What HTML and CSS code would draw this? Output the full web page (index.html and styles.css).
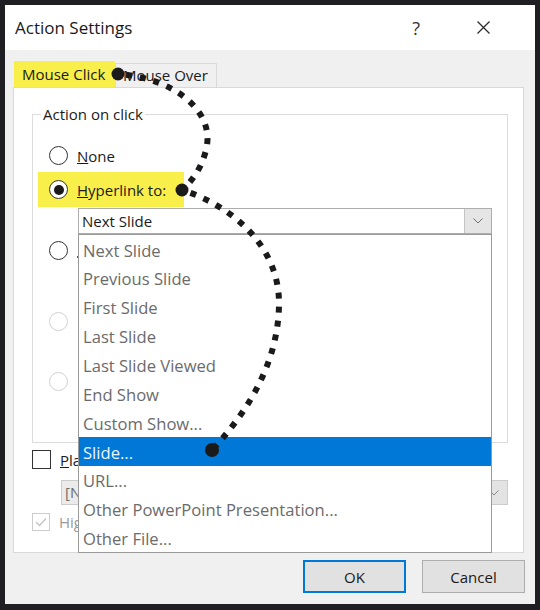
FILE: index.html
```html
<!DOCTYPE html>
<html lang="en">
<head>
<meta charset="utf-8">
<title>Action Settings</title>
<link rel="stylesheet" href="styles.css">
</head>
<body>
<div class="dialog">
  <div class="titlebar">
    <span class="title">Action Settings</span>
    <span class="help">?</span>
    <svg class="close" width="13" height="13" viewBox="0 0 13 13"><path d="M0.5 0.5 L12.5 12.5 M12.5 0.5 L0.5 12.5" stroke="#2b2b2b" stroke-width="1.3" fill="none"/></svg>
  </div>
  <div class="content">
    <div class="tabs">
      <div class="tab active">Mouse Click</div>
      <div class="tab">Mouse Over</div>
    </div>
    <div class="panel">
      <fieldset class="group">
        <legend>Action on click</legend>
        <div class="opt o1"><span class="radio"></span><span><u>N</u>one</span></div>
        <div class="opt o2"><span class="hl"><span class="radio on"></span><span><u>H</u>yperlink to:</span></span></div>
        <div class="combo"><span class="val">Next Slide</span><span class="cbtn"><svg width="10" height="6" viewBox="0 0 10 6"><path d="M0.5 0.5 L5 5 L9.5 0.5" stroke="#707070" stroke-width="1" fill="none"/></svg></span></div>
        <div class="opt o3"><span class="radio"></span><span class="mark"></span></div>
        <div class="opt o4 dis"><span class="radio"></span></div>
        <div class="opt o5 dis"><span class="radio"></span></div>
      </fieldset>
      <div class="chk-row"><span class="check"></span><span><u>P</u>lay sound:</span></div>
      <div class="combo sound"><span class="val">[No Sound]</span><span class="cbtn"><svg width="10" height="6" viewBox="0 0 10 6"><path d="M0.5 0.5 L5 5 L9.5 0.5" stroke="#8a8a8a" stroke-width="1" fill="none"/></svg></span></div>
      <div class="chk-row hi"><span class="check on"><svg width="12" height="10" viewBox="0 0 12 10"><path d="M1 5 L4.5 8.5 L11 1.5" stroke="#c4c4c4" stroke-width="1.4" fill="none"/></svg></span><span>Highlight <u>c</u>lick</span></div>
    </div>
    <div class="buttons">
      <button class="btn ok">OK</button>
      <button class="btn">Cancel</button>
    </div>
  </div>
  <ul class="dropdown">
    <li>Next Slide</li>
    <li>Previous Slide</li>
    <li>First Slide</li>
    <li>Last Slide</li>
    <li>Last Slide Viewed</li>
    <li>End Show</li>
    <li>Custom Show...</li>
    <li class="sel">Slide...</li>
    <li>URL...</li>
    <li>Other PowerPoint Presentation...</li>
    <li>Other File...</li>
  </ul>
</div>
<svg class="annot" width="540" height="610" viewBox="0 0 540 610">
  <path d="M118 74 C175 78 216 112 206 150 C201 170 191 182 182 190" fill="none" stroke="#1a1a1a" stroke-width="6" stroke-dasharray="6 8" stroke-dashoffset="-8"/>
  <path d="M182 190 C230 205 280 245 279 305 C278 370 240 420 212 450" fill="none" stroke="#1a1a1a" stroke-width="6" stroke-dasharray="6 8" stroke-dashoffset="-9"/>
  <circle cx="118" cy="74" r="6.5" fill="#1a1a1a"/>
  <circle cx="182" cy="190" r="6.5" fill="#1a1a1a"/>
  <circle cx="212" cy="450" r="7" fill="#1a1a1a"/>
</svg>
</body>
</html>
```
FILE: styles.css
```css
html, body {
  margin: 0;
  padding: 0;
}
body {
  width: 540px;
  height: 610px;
  overflow: hidden;
  background: #1f1f23;
  font-family: "Open Sans", "Noto Sans", sans-serif;
  color: #1a1a1a;
  position: relative;
}
.dialog {
  position: relative;
  margin: 5px;
  width: 530px;
  height: 599px;
  background: #f0f0f0;
  display: flex;
  flex-direction: column;
}
.titlebar {
  height: 45px;
  flex: none;
  background: #fff;
  display: flex;
  align-items: center;
  padding-left: 10px;
}
.title {
  flex: 1;
  font-size: 17px;
}
.help {
  font-size: 18px;
  color: #333;
}
.close {
  margin-left: 57px;
  margin-right: 45px;
}
.content {
  flex: 1;
  padding: 11px 11px 0 8px;
  display: flex;
  flex-direction: column;
}
.tabs {
  display: flex;
  align-items: flex-end;
  height: 26px;
}
.tab {
  box-sizing: border-box;
  width: 102px;
  height: 24px;
  line-height: 23px;
  font-size: 15px;
  padding-left: 7px;
  border: 1px solid #d9d9d9;
  border-bottom: none;
  background: #f0f0f0;
}
.tab.active {
  width: 101px;
  height: 26px;
  line-height: 26px;
  margin-left: 1px;
  padding-left: 8px;
  border: none;
  background: #f9ef4a;
}
.panel {
  box-sizing: border-box;
  height: 466px;
  border: 1px solid #d9d9d9;
  background: #fff;
  padding-left: 18px;
}
.group {
  box-sizing: border-box;
  width: 476px;
  margin: 16px 0 0 0;
  padding: 15px 0 47px 0;
  border: 1px solid #dcdcdc;
  min-width: 0;
}
.group legend {
  font-size: 15px;
  line-height: 20px;
  margin-left: 8px;
  padding: 0 2px;
}
.opt {
  display: flex;
  align-items: center;
  font-size: 15px;
}
.o1 { height: 33px; padding-left: 16px; }
.o2 { height: 35px; padding-left: 5px; }
.o3 { height: 28px; margin-top: 2px; padding-left: 16px; }
.o4 { height: 28px; margin-top: 43px; padding-left: 16px; }
.o5 { height: 28px; margin-top: 32px; padding-left: 16px; }
.mark {
  width: 2px;
  height: 2px;
  margin-top: 14px;
  background: #555;
}
.hl {
  display: flex;
  align-items: center;
  height: 35px;
  background: #f9ef4a;
  padding: 0 18px 0 11px;
}
.radio {
  box-sizing: border-box;
  width: 19px;
  height: 19px;
  border: 1.5px solid #333;
  border-radius: 50%;
  background: #fff;
  margin-right: 9px;
  display: flex;
  align-items: center;
  justify-content: center;
  flex: none;
}
.radio.on::after {
  content: "";
  width: 10px;
  height: 10px;
  border-radius: 50%;
  background: #1a1a1a;
}
.opt.dis .radio { border-color: #d2d2d2; }
.combo {
  box-sizing: border-box;
  margin: 1px 0 0 45px;
  width: 414px;
  height: 26px;
  border: 1px solid #adadad;
  background: #fff;
  display: flex;
}
.combo .val {
  flex: 1;
  padding-left: 3px;
  font-size: 15px;
  line-height: 24px;
}
.cbtn {
  width: 26px;
  background: #e5e5e5;
  border-left: 1px solid #c4c4c4;
  display: flex;
  align-items: center;
  justify-content: center;
}
.combo.sound {
  margin: 11px 0 0 29px;
  width: 447px;
  height: 25px;
  border-color: #cccccc;
  background: #ebebeb;
}
.combo.sound .val {
  color: #6d6d6d;
  line-height: 23px;
}
.combo.sound .cbtn {
  background: #e3e3e3;
  border-left-color: #cccccc;
}
.chk-row {
  display: flex;
  align-items: center;
  height: 19px;
  margin-top: 7px;
  font-size: 15px;
}
.chk-row.hi {
  height: 18px;
  margin-top: 8px;
  color: #9a9a9a;
}
.check {
  box-sizing: border-box;
  width: 19px;
  height: 19px;
  border: 1.5px solid #333;
  background: #fff;
  margin-right: 9px;
  display: flex;
  align-items: center;
  justify-content: center;
}
.chk-row.hi .check {
  width: 18px;
  height: 18px;
  border-color: #cccccc;
}
.buttons {
  display: flex;
  justify-content: flex-end;
  gap: 16px;
  margin-top: 7px;
  margin-right: -1px;
}
.btn {
  box-sizing: border-box;
  width: 103px;
  height: 33px;
  padding: 0;
  font-family: "Open Sans", "Noto Sans", sans-serif;
  font-size: 15px;
  color: #1a1a1a;
  background: #e1e1e1;
  border: 1px solid #adadad;
}
.btn.ok {
  border: 2px solid #0078d7;
}
.dropdown {
  position: absolute;
  left: 73px;
  top: 229px;
  box-sizing: border-box;
  width: 414px;
  height: 319px;
  margin: 0;
  padding: 0;
  list-style: none;
  border: 1px solid #9a9a9a;
  background: #fff;
  font-size: 16.6px;
  color: #6b6b6b;
}
.dropdown li {
  box-sizing: border-box;
  height: 28.86px;
  line-height: 27.36px;
  padding: 1.5px 0 0 4px;
  white-space: nowrap;
}
.dropdown li.sel {
  background: #0078d7;
  color: #eef5fd;
}
.annot {
  position: absolute;
  left: 0;
  top: 0;
  pointer-events: none;
}
```
